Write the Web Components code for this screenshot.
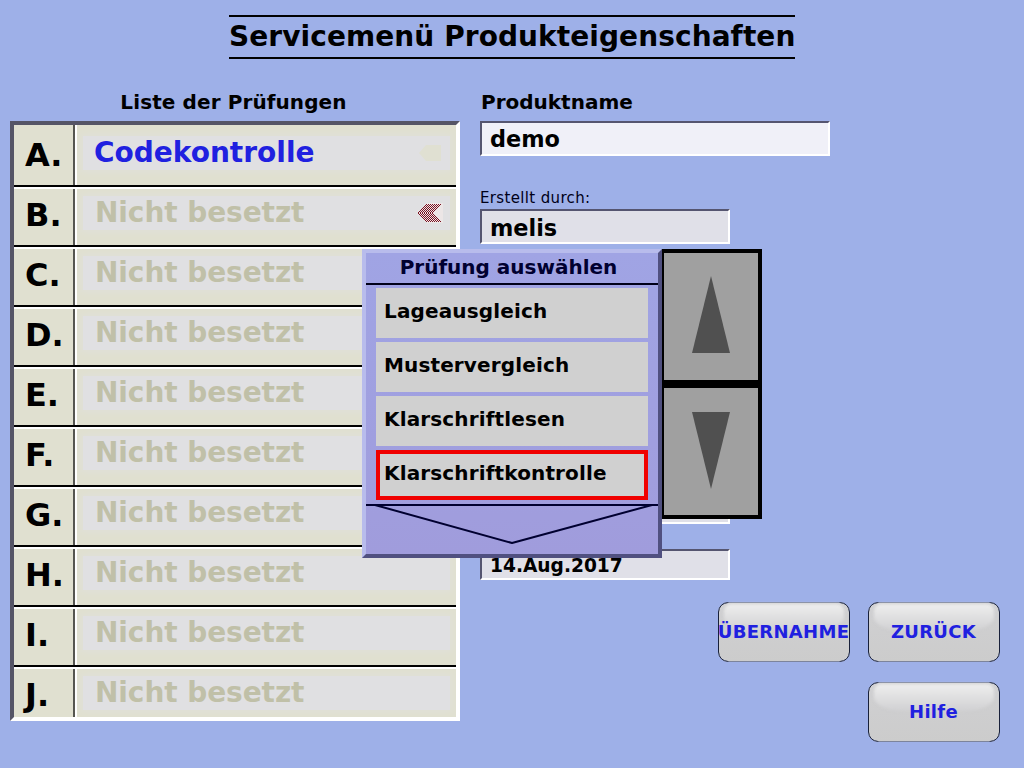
<!DOCTYPE html>
<html lang="de">
<head>
<meta charset="utf-8">
<title>Servicemenü Produkteigenschaften</title>
<style>
    html, body { margin: 0; height: 100%; background: #9eb0e8; }
    body { font-family: "DejaVu Sans", sans-serif; color: #000; overflow: hidden; }
</style>
</head>
<body>
<service-screen>
    <page-title slot="title">Servicemenü Produkteigenschaften</page-title>

    <check-list slot="list" caption="Liste der Prüfungen">
        <check-row first letter="A." state="active" icon="faint">Codekontrolle</check-row>
        <check-row letter="B." icon="marked">Nicht besetzt</check-row>
        <check-row letter="C.">Nicht besetzt</check-row>
        <check-row letter="D.">Nicht besetzt</check-row>
        <check-row letter="E.">Nicht besetzt</check-row>
        <check-row letter="F.">Nicht besetzt</check-row>
        <check-row letter="G.">Nicht besetzt</check-row>
        <check-row letter="H.">Nicht besetzt</check-row>
        <check-row letter="I.">Nicht besetzt</check-row>
        <check-row last letter="J.">Nicht besetzt</check-row>
    </check-list>

    <form-field slot="form" label="Produktname" big wide tone="light" style="margin-bottom:32px">demo</form-field>
    <form-field slot="form" label="Erstellt durch:" style="margin-bottom:245px">melis</form-field>
    <form-field slot="form" style="margin-bottom:25px"></form-field>
    <form-field slot="form" small>14.Aug.2017</form-field>

    <glossy-button slot="actions">ÜBERNAHME</glossy-button>
    <glossy-button slot="actions">ZURÜCK</glossy-button>
    <glossy-button slot="actions" style="grid-column:2">Hilfe</glossy-button>

    <select-dialog slot="overlay" caption="Prüfung auswählen">
        <dialog-item>Lageausgleich</dialog-item>
        <dialog-item>Mustervergleich</dialog-item>
        <dialog-item>Klarschriftlesen</dialog-item>
        <dialog-item selected>Klarschriftkontrolle</dialog-item>
    </select-dialog>
    <spin-pad slot="overlay"></spin-pad>
</service-screen>

<script>
// Bildschirm: Titel, Liste links, Formular rechts, Dialog darüber
class ServiceScreen extends HTMLElement {
	constructor() {
		super();
		this.attachShadow({ mode: "open" }).innerHTML = `
<style>
    :host { display: block; position: relative; width: 1024px; height: 768px; box-sizing: border-box; padding: 15px 10px 0; }
    .title { display: flex; justify-content: center; margin-bottom: 30px; }
    .main { display: flex; align-items: flex-start; gap: 20px; }
    .right { display: flex; flex-direction: column; align-items: flex-start; flex: 1; padding-top: 4px; }
    .actions { display: grid; grid-template-columns: 132px 132px; column-gap: 18px; row-gap: 20px; margin: 22px 0 0 238px; }
</style>
<div class="title"><slot name="title"></slot></div>
<div class="main">
    <slot name="list"></slot>
    <div class="right">
        <slot name="form"></slot>
        <div class="actions"><slot name="actions"></slot></div>
    </div>
</div>
<slot name="overlay"></slot>`;
	}
}

class PageTitle extends HTMLElement {
	constructor() {
		super();
		this.attachShadow({ mode: "open" }).innerHTML = `
<style>
    :host { display: block; width: 566px; height: 44px; box-sizing: border-box; border-top: 2px solid #000; border-bottom: 2px solid #000;
        font: bold 28px/40px "DejaVu Sans", sans-serif; text-align: center; white-space: nowrap; letter-spacing: .08px; }
</style>
<slot></slot>`;
	}
}

class CheckList extends HTMLElement {
	constructor() {
		super();
		this.attachShadow({ mode: "open" }).innerHTML = `
<style>
    :host { display: block; width: 450px; }
    .caption { font: bold 20px/26px "DejaVu Sans", sans-serif; text-align: center; margin-right: 3px; height: 32px; letter-spacing: .1px; }
    .box { box-sizing: border-box; height: 600px; border: 4px solid; border-color: #555566 #fff #fff #555566; background: #e0e0d0; overflow: hidden; }
</style>
<div class="caption"></div>
<div class="box"><slot></slot></div>`;
		this.shadowRoot.querySelector(".caption").textContent = this.getAttribute("caption");
	}
}

class CheckRow extends HTMLElement {
	constructor() {
		super();
		this.attachShadow({ mode: "open" }).innerHTML = `
<style>
    :host { display: block; box-sizing: border-box; height: 60px; border-top: 2px solid #fff; border-bottom: 2px solid #000; background: #e0e0d0; }
    :host([first]) { height: 62px; border-top: 0; }
    :host([last]) { height: 50px; border-bottom: 0; }
    .row { display: grid; grid-template-columns: 61px 1fr; height: 100%; }
    .letter { font: bold 32px/52px "DejaVu Sans", sans-serif; padding-left: 11px; border-right: 2px solid #555550; }
    :host([first]) .letter { line-height: 60px; }
    .name { display: flex; border-left: 2px solid #fff; padding: 7px 6px 0 6px; }
    :host([first]) .name { padding-top: 11px; }
    .plate { flex: 1; height: 34px; box-sizing: border-box; padding: 0 7px 0 12px; background: #e0e0e2; box-shadow: 0 0 6px 2px #e0e0d8;
        font: bold 28px/36px "DejaVu Sans", sans-serif; letter-spacing: -.08px; color: #c0c0a8; white-space: nowrap; display: flex; justify-content: space-between; align-items: center; }
    :host([state="active"]) .plate { color: #2020e0; padding-left: 11px; letter-spacing: 0; }
    svg { display: block; }
</style>
<div class="row">
    <div class="letter"></div>
    <div class="name"><div class="plate"><span><slot></slot></span><span class="icon"></span></div></div>
</div>`;
		this.shadowRoot.querySelector(".letter").textContent = this.getAttribute("letter");
		const icon = this.getAttribute("icon");
		// Marker rechts: blass in Zeile A, gestreift in Zeile B
		if (icon === "faint") {
			this.shadowRoot.querySelector(".icon").innerHTML =
				'<svg width="26" height="20" viewBox="0 0 26 20"><path d="M2 10 9 2h15v16H9z" fill="#e0e0d2"/></svg>';
		} else if (icon === "marked") {
			let d = "";
			for (let i = 0; i < 8; i++) {
				d += `M${10 + i * 2} 1 ${1 + i * 2} 10 ${10 + i * 2} 19`;
			}
			this.shadowRoot.querySelector(".icon").innerHTML =
				`<svg width="26" height="20" viewBox="0 0 26 20"><path d="M0 10 10 0h16v20H10z" fill="#ece6e6"/><path d="${d}" fill="none" stroke="#7a1020" stroke-width="1" shape-rendering="crispEdges"/></svg>`;
		}
	}
}

class FormField extends HTMLElement {
	constructor() {
		super();
		this.attachShadow({ mode: "open" }).innerHTML = `
<style>
    :host { display: block; }
    .label { font: 15px/20px "DejaVu Sans", sans-serif; height: 21px; color: #000018; letter-spacing: .35px; }
    .label:empty { display: none; }
    :host([big]) .label { font: bold 20px/26px "DejaVu Sans", sans-serif; height: 32px; padding-left: 1px; letter-spacing: 0; color: #000; margin-top: -4px; }
    .box { box-sizing: border-box; width: 250px; height: 35px; border: 2px solid; border-color: #555570 #fff #fff #555570; background: #e0e0e8;
        font: bold 22.4px/35px "DejaVu Sans", sans-serif; padding-left: 8px; overflow: hidden; white-space: nowrap; }
    :host([wide]) .box { width: 350px; }
    :host([big]) .box { line-height: 33px; }
    :host([tone="light"]) .box { background: #f0f0f8; }
    :host([small]) .box { height: 31px; font-size: 18.6px; line-height: 29px; }
</style>
<div class="label"></div>
<div class="box"><slot></slot></div>`;
		this.shadowRoot.querySelector(".label").textContent = this.getAttribute("label") || "";
	}
}

class GlossyButton extends HTMLElement {
	constructor() {
		super();
		this.attachShadow({ mode: "open" }).innerHTML = `
<style>
    :host { display: flex; position: relative; box-sizing: border-box; width: 132px; height: 60px; align-items: center; justify-content: center;
        border: 1px solid #7c849c; border-radius: 10px; white-space: nowrap;
        background: linear-gradient(#d0d0d2 0, #cccccc 100%);
        font: bold 18px/24px "DejaVu Sans", sans-serif; letter-spacing: .3px; color: #2020e0; padding: 0 1px 0 0; }
    :host::after { content: ""; position: absolute; inset: -1px; border: 1px solid #18203a; border-radius: 10px; pointer-events: none;
        -webkit-mask-image: linear-gradient(90deg, #000 9px, transparent 11px, transparent calc(100% - 11px), #000 calc(100% - 9px));
        mask-image: linear-gradient(90deg, #000 9px, transparent 11px, transparent calc(100% - 11px), #000 calc(100% - 9px)); }
    .gloss { position: absolute; left: 5px; right: 5px; top: 1px; height: 27px; border-radius: 7px 7px 30px 30px / 7px 7px 14px 14px;
        background: linear-gradient(#eeeeee, #d0d0d2); filter: blur(1.5px); }
    span { position: relative; }
</style>
<div class="gloss"></div>
<span><slot></slot></span>`;
	}
}

class SelectDialog extends HTMLElement {
	constructor() {
		super();
		this.attachShadow({ mode: "open" }).innerHTML = `
<style>
    :host { display: block; position: absolute; left: 362px; top: 249px; width: 300px; height: 309px; box-sizing: border-box;
        border: 4px solid; border-color: #b8bcec #505080 #505080 #b8bcec; background: linear-gradient(#a0a4e4, #a09cdc); }
    .caption { box-sizing: border-box; height: 32px; border-bottom: 2px solid #000018; margin-bottom: 3px; text-align: center; padding-right: 7px;
        font: bold 20px/28px "DejaVu Sans", sans-serif; color: #000030; }
    .items { display: flex; flex-direction: column; gap: 4px; padding-left: 10px; }
    svg { display: block; margin-top: 4px; overflow: visible; }
</style>
<div class="caption"></div>
<div class="items"><slot></slot></div>
<svg width="292" height="42" viewBox="0 0 292 42"><path d="M0 1H292M9 1 146 39 286 1" fill="none" stroke="#000030" stroke-width="2" stroke-linejoin="bevel"/></svg>`;
		this.shadowRoot.querySelector(".caption").textContent = this.getAttribute("caption");
	}
}

class DialogItem extends HTMLElement {
	constructor() {
		super();
		this.attachShadow({ mode: "open" }).innerHTML = `
<style>
    :host { display: block; box-sizing: border-box; width: 272px; height: 50px; padding: 9px 0 0 8px; background: #d0d0d0;
        font: bold 20px/28px "DejaVu Sans", sans-serif; letter-spacing: .14px; white-space: nowrap; }
    :host([selected]) { border: 4px solid #f00000; padding: 5px 0 0 4px; }
</style>
<slot></slot>`;
	}
}

class SpinPad extends HTMLElement {
	constructor() {
		super();
		this.attachShadow({ mode: "open" }).innerHTML = `
<style>
    :host { display: flex; flex-direction: column; position: absolute; left: 662px; top: 249px; width: 100px; height: 270px; box-sizing: border-box;
        border: 4px solid #000; border-left-width: 2px; background: #000; gap: 8px; }
    div { flex: 1; display: flex; align-items: center; justify-content: center; background: #a0a0a0; padding-bottom: 3px; }
    svg { display: block; }
</style>
<div><svg width="40" height="78" viewBox="0 0 40 78"><path d="M20 0 39 77H1z" fill="#505050"/></svg></div>
<div><svg width="40" height="78" viewBox="0 0 40 78"><path d="M1 1H39L20 78z" fill="#505050"/></svg></div>`;
	}
}

customElements.define("service-screen", ServiceScreen);
customElements.define("page-title", PageTitle);
customElements.define("check-list", CheckList);
customElements.define("check-row", CheckRow);
customElements.define("form-field", FormField);
customElements.define("glossy-button", GlossyButton);
customElements.define("select-dialog", SelectDialog);
customElements.define("dialog-item", DialogItem);
customElements.define("spin-pad", SpinPad);
</script>
</body>
</html>
